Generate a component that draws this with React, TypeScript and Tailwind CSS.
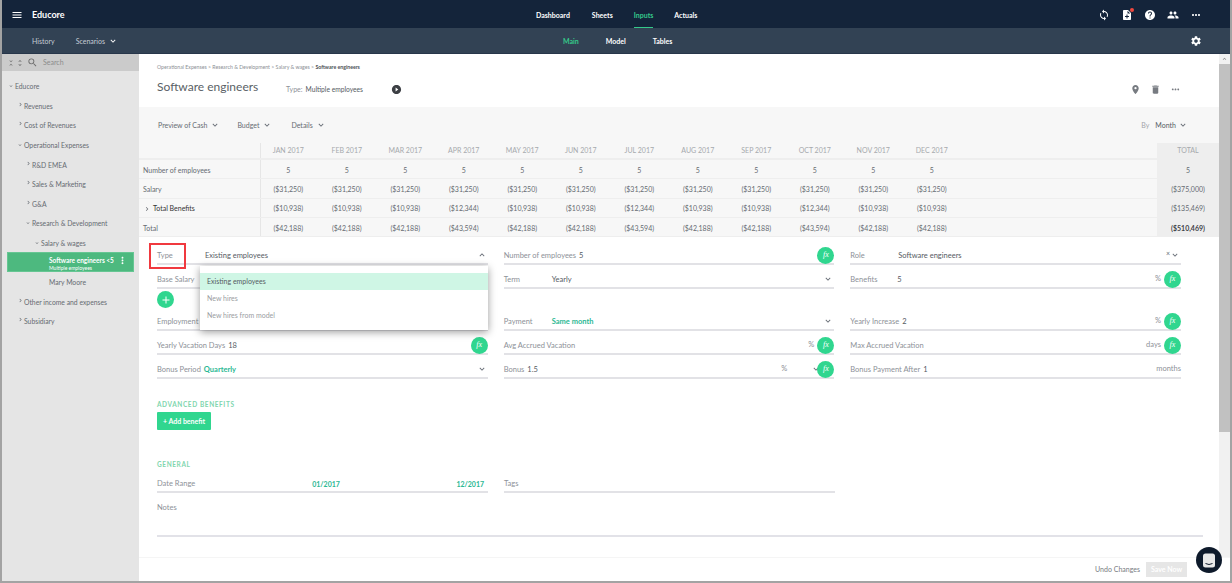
import type { ReactNode } from 'react';
import {
  MdAdd,
  MdDelete,
  MdExpandLess,
  MdExpandMore,
  MdHelp,
  MdKeyboardArrowRight,
  MdMenu,
  MdMoreHoriz,
  MdMoreVert,
  MdNoteAdd,
  MdPeople,
  MdPlace,
  MdPlayCircleFilled,
  MdSearch,
  MdSettings,
  MdSync,
  MdUnfoldLess,
  MdUnfoldMore,
} from 'react-icons/md';

const months = ['JAN', 'FEB', 'MAR', 'APR', 'MAY', 'JUN', 'JUL', 'AUG', 'SEP', 'OCT', 'NOV', 'DEC'];

const rows = [
  { label: 'Number of employees', values: Array(12).fill('5'), total: '5' },
  { label: 'Salary', values: Array(12).fill('($31,250)'), total: '($375,000)' },
  {
    label: 'Total Benefits',
    values: ['($10,938)', '($10,938)', '($10,938)', '($12,344)', '($10,938)', '($10,938)', '($12,344)', '($10,938)', '($10,938)', '($12,344)', '($10,938)', '($10,938)'],
    total: '($135,469)',
  },
  {
    label: 'Total',
    values: ['($42,188)', '($42,188)', '($42,188)', '($43,594)', '($42,188)', '($42,188)', '($43,594)', '($42,188)', '($42,188)', '($43,594)', '($42,188)', '($42,188)'],
    total: '($510,469)',
  },
];

const tree = [
  { name: 'Educore', pad: 'pl-[13px]', open: true },
  { name: 'Revenues', pad: 'pl-[22px]' },
  { name: 'Cost of Revenues', pad: 'pl-[22px]' },
  { name: 'Operational Expenses', pad: 'pl-[22px]', open: true },
  { name: 'R&D EMEA', pad: 'pl-[30px]' },
  { name: 'Sales & Marketing', pad: 'pl-[30px]' },
  { name: 'G&A', pad: 'pl-[30px]' },
  { name: 'Research & Development', pad: 'pl-[30px]', open: true },
  { name: 'Salary & wages', pad: 'pl-[39px]', open: true },
];

function Fx() {
  return (
    <div className="w-[17px] h-[17px] shrink-0 rounded-full bg-[#30d68f] flex items-center justify-center text-white text-[8px] italic font-['Liberation_Serif',serif]">
      fx
    </div>
  );
}

function Chevron({ className = '' }: { className?: string }) {
  return <MdExpandMore className={`text-[10px] text-[#666c75] shrink-0 ${className}`} />;
}

function Field({ label, labelW = '', children }: { label: string; labelW?: string; children?: ReactNode }) {
  return (
    <div className="h-[24px] pt-[6px] border-b-2 border-[#e2e2e6] flex items-center text-[7.5px]">
      <span className={`pt-[2px] text-[#8d9198] whitespace-nowrap shrink-0 ${labelW}`}>{label}</span>
      {children}
    </div>
  );
}

function Val({ children, green }: { children: ReactNode; green?: boolean }) {
  return <span className={`pt-[2px] ml-[3px] whitespace-nowrap ${green ? 'text-[#2bb893] font-bold' : 'text-[#555b63]'}`}>{children}</span>;
}

function SideRow({ name, pad, open, hasArrow = true }: { name: string; pad: string; open?: boolean; hasArrow?: boolean }) {
  return (
    <div className={`relative h-[19.6px] pt-[1px] flex items-center text-[6.8px] text-[#666b72] whitespace-nowrap ${pad}`}>
      {hasArrow && (
        <span className="relative w-0">
          {open ? (
            <MdExpandMore className="absolute -left-[7px] -top-[3px] text-[6px]" />
          ) : (
            <MdKeyboardArrowRight className="absolute -left-[7px] -top-[5px] text-[7px]" />
          )}
        </span>
      )}
      {name}
    </div>
  );
}

export default function App() {
  return (
    <div className="relative w-[1232px] h-[583px] box-border border-x-2 border-b-2 border-[#a3a3a3] overflow-hidden bg-white font-['Lato',sans-serif] flex flex-col">
      <header className="h-[28px] shrink-0 pt-[2px] bg-[#14243a] flex items-center text-white relative">
        <MdMenu className="ml-[9px] text-[12px]" />
        <span className="ml-[9px] text-[9px] font-bold">Educore</span>
        <nav className="absolute left-[534px] top-0 h-[28px] flex gap-[21px] items-center text-[7px] font-bold">
          <span className="pt-[3px]">Dashboard</span>
          <span className="pt-[3px] ml-[1px]">Sheets</span>
          <span className="h-[28px] pt-[3px] flex items-center text-[#35c98a] border-b border-[#35c98a]">Inputs</span>
          <span className="pt-[3px]">Actuals</span>
        </nav>
        <div className="ml-auto mr-[28px] flex items-center gap-[11px] text-[12px]">
          <MdSync />
          <span className="relative">
            <MdNoteAdd />
            <span className="absolute -top-[1px] -right-[1px] w-[4px] h-[4px] rounded-full bg-[#f0483e]" />
          </span>
          <MdHelp />
          <MdPeople />
          <MdMoreHoriz />
        </div>
      </header>

      <div className="h-[26px] shrink-0 pt-[1px] bg-[#324254] border-b border-[#27364a] flex items-center text-white relative">
        <span className="ml-[30px] text-[7px] text-[#c5ccd4]">History</span>
        <span className="ml-[21px] text-[7px] text-[#c5ccd4]">Scenarios</span>
        <MdExpandMore className="ml-[3px] text-[10px]" />
        <nav className="absolute left-[561px] top-0 h-[25px] pt-[2px] flex gap-[27px] items-center text-[7px] font-bold">
          <span className="text-[#35c98a]">Main</span>
          <span>Model</span>
          <span>Tables</span>
        </nav>
        <MdSettings className="ml-auto mr-[28px] text-[12px]" />
      </div>

      <div className="flex-1 min-h-0 flex">
        <aside className="w-[137px] shrink-0 bg-[#e5e5e5]">
          <div className="h-[17px] bg-[#cbcbcb] flex items-center pl-[5px] text-[#6b6b6b]">
            <MdUnfoldLess className="text-[8px]" />
            <MdUnfoldMore className="text-[8px] ml-[1px]" />
            <MdSearch className="ml-[3px] text-[11px]" />
            <span className="ml-[5px] text-[7px] text-[#8b8b8b]">Search</span>
          </div>
          <div className="mt-[5px]">
            {tree.map((t) => (
              <SideRow key={t.name} name={t.name} pad={t.pad} open={t.open} />
            ))}
            <div className="mx-[5px] h-[19.6px] bg-[#4db97f] border border-[#66c693] flex items-center text-white pl-[41px] relative overflow-hidden">
              <div className="whitespace-nowrap text-[6.5px] font-bold -mt-[3px]">Software engineers &lt;5</div>
              <div className="absolute left-[41px] top-[12px] text-[5px] leading-[6px] whitespace-nowrap">Multiple employees</div>
              <MdMoreVert className="absolute right-[5px] top-[2px] text-[11px]" />
            </div>
            <SideRow name="Mary Moore" pad="pl-[47px]" hasArrow={false} />
            <SideRow name="Other income and expenses" pad="pl-[22px]" />
            <SideRow name="Subsidiary" pad="pl-[22px]" />
          </div>
        </aside>

        <main className="flex-1 min-w-0 flex flex-col relative">
          <div className="h-[503px] shrink-0 flex">
            <div className="flex-1 min-w-0 relative overflow-hidden">
              <section className="h-[53px] flex flex-col pl-[18px]">
                <div className="mt-[10px] text-[5.2px] leading-[7px] text-[#8b8f95] whitespace-nowrap">
                  Operational Expenses &gt; Research &amp; Development &gt; Salary &amp; wages &gt;{' '}
                  <span className="text-[#4b4f55] font-bold">Software engineers</span>
                </div>
                <div className="mt-[8px] flex items-center">
                  <h1 className="w-[129px] text-[12px] leading-[16px] text-[#5a5f66] whitespace-nowrap">Software engineers</h1>
                  <span className="mt-[4px] text-[7px] text-[#8d9198]">Type:</span>
                  <span className="mt-[4px] ml-[3px] text-[6.7px] text-[#555b63]">Multiple employees</span>
                  <MdPlayCircleFilled className="mt-[5px] ml-[28px] text-[11px] text-[#3c3f44]" />
                  <div className="ml-auto mt-[4px] mr-[38px] flex items-center gap-[9px] text-[11px] text-[#777b81]">
                    <MdPlace />
                    <MdDelete />
                    <MdMoreHoriz />
                  </div>
                </div>
              </section>

              <section className="h-[130px] bg-[#f7f7f7] flex flex-col">
                <div className="h-[36px] shrink-0 flex items-center pl-[19px] text-[7px] text-[#666b72]">
                  <span>Preview of Cash</span>
                  <Chevron className="ml-[3px]" />
                  <span className="ml-[17px]">Budget</span>
                  <Chevron className="ml-[3px]" />
                  <span className="ml-[19px]">Details</span>
                  <Chevron className="ml-[3px]" />
                  <span className="ml-auto text-[#a2a5a9]">By</span>
                  <span className="ml-[6px] text-[#555b63]">Month</span>
                  <Chevron className="ml-[2px] mr-[31px]" />
                </div>
                <div className="h-[17px] shrink-0 flex border-b-2 border-[#eeeeee] text-[7px] text-[#a6a9ad]">
                  <div className="w-[122px] border-r border-[#e6e6e6]" />
                  {months.map((m) => (
                    <div key={m} className="w-[58.5px] pr-[4px] text-center leading-[15px]">
                      {m} 2017
                    </div>
                  ))}
                  <div className="ml-auto w-[62px] bg-[#eeeeee] text-center leading-[15px]">TOTAL</div>
                </div>
                {rows.map((r) => (
                  <div key={r.label} className="flex-1 flex items-center border-b border-[#eeeeee] text-[7px] text-[#666b72]">
                    <div className="w-[122px] h-full shrink-0 pt-[2px] border-r border-[#e6e6e6] flex items-center pl-[4px] whitespace-nowrap">
                      {r.label === 'Total Benefits' ? (
                        <>
                          <MdKeyboardArrowRight className="text-[8px]" />
                          <span className="ml-[2px] text-[#333]">{r.label}</span>
                        </>
                      ) : (
                        r.label
                      )}
                    </div>
                    {r.values.map((v, i) => (
                      <div key={i} className="w-[58.5px] pt-[2px] pr-[4px] text-center whitespace-nowrap">
                        {v}
                      </div>
                    ))}
                    <div className={`ml-auto w-[62px] h-full pt-[2px] bg-[#eeeeee] flex items-center justify-center ${r.label === 'Total' ? 'font-bold text-[#3f4349]' : ''}`}>
                      {r.total}
                    </div>
                  </div>
                ))}
              </section>

              <section className="pl-[18px] pt-[4px]">
                <div className="w-[1024px] grid grid-cols-3 gap-x-[16px]">
                  <Field label="Type" labelW="w-[45px]">
                    <Val>Existing employees</Val>
                    <MdExpandLess className="ml-auto mr-[1px] text-[10px] text-[#666c75]" />
                  </Field>
                  <Field label="Number of employees">
                    <Val>5</Val>
                    <div className="ml-auto"><Fx /></div>
                  </Field>
                  <Field label="Role" labelW="w-[45px]">
                    <Val>Software engineers</Val>
                    <span className="ml-auto text-[7px] text-[#666c75] -mt-[3px]">×</span>
                    <Chevron className="mr-[1px]" />
                  </Field>

                  <Field label="Base Salary" />
                  <Field label="Term" labelW="w-[45px]">
                    <Val>Yearly</Val>
                    <Chevron className="ml-auto mr-[1px]" />
                  </Field>
                  <Field label="Benefits" labelW="w-[44px]">
                    <Val>5</Val>
                    <span className="ml-auto mr-[3px] text-[#8d9198]">%</span>
                    <Fx />
                  </Field>

                  <div className="h-[18px] col-span-3 pt-[2px]">
                    <div className="w-[17px] h-[17px] rounded-full bg-[#30d68f] flex items-center justify-center text-white text-[12px]">
                      <MdAdd />
                    </div>
                  </div>

                  <Field label="Employment" />
                  <Field label="Payment" labelW="w-[45px]">
                    <Val green>Same month</Val>
                    <Chevron className="ml-auto mr-[1px]" />
                  </Field>
                  <Field label="Yearly Increase">
                    <Val>2</Val>
                    <span className="ml-auto mr-[3px] text-[#8d9198]">%</span>
                    <Fx />
                  </Field>

                  <Field label="Yearly Vacation Days">
                    <Val>18</Val>
                    <div className="ml-auto"><Fx /></div>
                  </Field>
                  <Field label="Avg Accrued Vacation">
                    <span className="ml-auto mr-[3px] text-[#8d9198]">%</span>
                    <Fx />
                  </Field>
                  <Field label="Max Accrued Vacation">
                    <span className="ml-auto mr-[3px] text-[#8d9198]">days</span>
                    <Fx />
                  </Field>

                  <Field label="Bonus Period">
                    <Val green>Quarterly</Val>
                    <Chevron className="ml-auto mr-[1px]" />
                  </Field>
                  <Field label="Bonus">
                    <Val>1.5</Val>
                    <span className="ml-auto text-[#8d9198]">%</span>
                    <Chevron className="ml-[24px] -mr-[4px]" />
                    <Fx />
                  </Field>
                  <Field label="Bonus Payment After">
                    <Val>1</Val>
                    <span className="ml-auto text-[#8d9198]">months</span>
                  </Field>
                </div>

                <div className="mt-[21px] text-[6.5px] leading-[9px] font-bold tracking-[0.6px] text-[#7fd6ae]">ADVANCED BENEFITS</div>
                <button className="block mt-[3px] w-[54px] h-[18px] rounded-[1px] bg-[#30d68f] text-white text-[7px] font-bold">+ Add benefit</button>
                <div className="mt-[30px] text-[6.5px] leading-[9px] font-bold tracking-[0.6px] text-[#7fd6ae]">GENERAL</div>
                <div className="w-[678px] grid grid-cols-[331px_331px] gap-x-[16px]">
                  <Field label="Date Range">
                    <span className="ml-[117px] pt-[2px] text-[7px] text-[#2bb893] font-bold">01/2017</span>
                    <span className="ml-auto mr-[4px] pt-[2px] text-[7px] text-[#2bb893] font-bold">12/2017</span>
                  </Field>
                  <Field label="Tags" />
                </div>
                <div className="w-[1046px] h-[44px] pt-[9px] border-b-2 border-[#e2e2e8] text-[7.5px] text-[#8d9198]">Notes</div>
              </section>

              <div className="absolute left-[61px] top-[212px] w-[288px] h-[64px] pt-[7px] bg-white shadow-[0_2px_8px_rgba(0,0,0,0.4)] text-[7px] text-[#9a9da2] z-10">
                <div className="h-[17px] pl-[7px] flex items-center bg-[#cff6e5] text-[#555b63]">Existing employees</div>
                <div className="h-[17px] pl-[7px] flex items-center">New hires</div>
                <div className="h-[17px] pl-[7px] flex items-center">New hires from model</div>
              </div>
              <div className="absolute left-[10px] top-[189px] w-[37px] h-[26px] border-2 border-[#f0393f] z-10" />
            </div>

            <div className="w-[11px] shrink-0 bg-[#f1f1f1] flex flex-col items-center">
              <MdExpandLess className="h-[10px] text-[7px] text-[#8b8b8b]" />
              <div className="w-full h-[368px] bg-[#c1c1c1]" />
            </div>
          </div>

          <footer className="flex-1 border-t border-[#f5f5f5] flex items-center justify-end pr-[43px] text-[7px]">
            <span className="text-[#777b81]">Undo Changes</span>
            <button className="ml-[6px] w-[41px] h-[15px] bg-[#e6e6e6] text-white font-bold">Save Now</button>
          </footer>
        </main>
      </div>

      <div className="absolute left-[1194px] top-[547px] w-[26px] h-[26px] rounded-full bg-[#0e1a2b] flex items-center justify-center">
        <svg width="14" height="15" viewBox="0 0 14 15">
          <rect x="1" y="0.5" width="12" height="14" rx="2.5" fill="#e8e8e8" />
          <path d="M3.5 10.5 Q7 12.5 10.5 10.5" stroke="#0e1a2b" strokeWidth="1" fill="none" />
        </svg>
      </div>
    </div>
  );
}
